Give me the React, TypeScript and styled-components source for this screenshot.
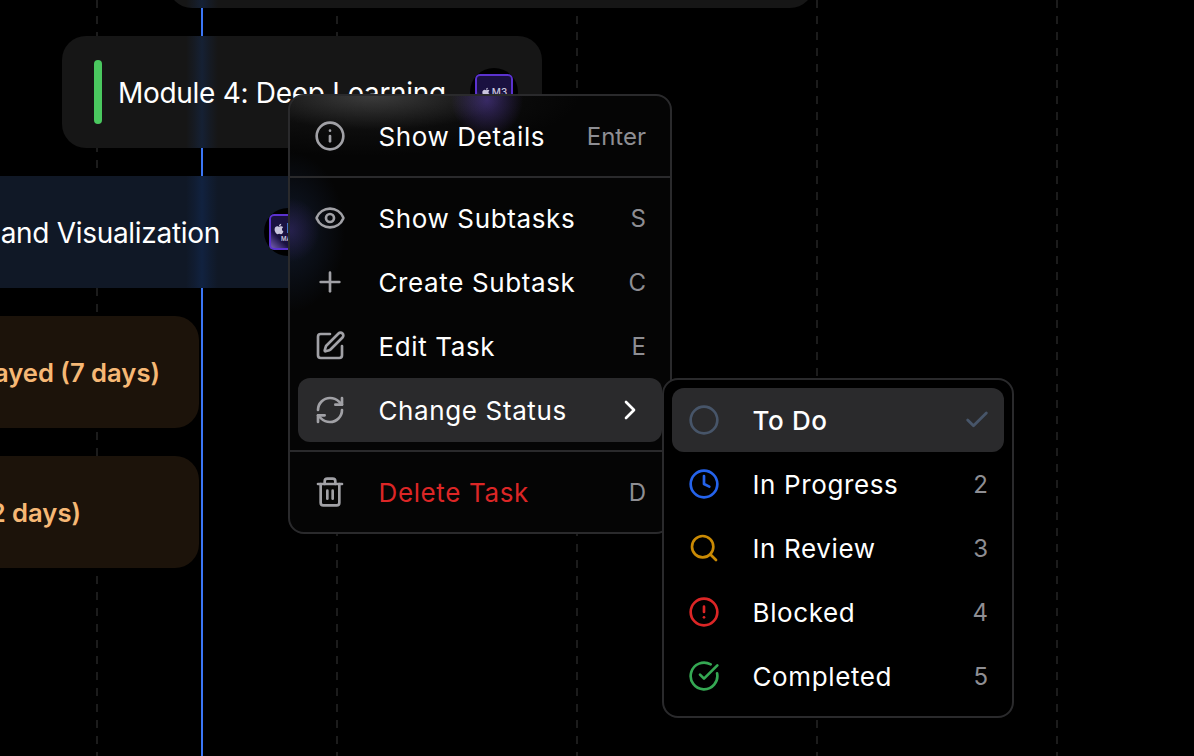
import React from 'react';
import styled, { createGlobalStyle } from 'styled-components';
import {
	Info,
	Eye,
	Plus,
	SquarePen,
	RefreshCw,
	Trash2,
	ChevronRight,
	Circle,
	Clock,
	Search,
	CircleAlert,
	CircleCheckBig,
	Check,
} from 'lucide-react';
import { FaApple } from 'react-icons/fa';

const GlobalStyle = createGlobalStyle`
	html, body {
		margin: 0;
		padding: 0;
		background: #000;
	}
	body {
		font-family: Inter, "Liberation Sans", sans-serif;
		-webkit-font-smoothing: antialiased;
	}
`;

const NOW_X = 202;

const Page = styled.div`
	position: relative;
	width: 1194px;
	height: 756px;
	overflow: hidden;
	background: #000;
`;

const GridLines = styled.div`
	position: absolute;
	inset: 0 0 0 96px;
	display: flex;
	gap: 238px;
`;

const GridLine = styled.div`
	width: 2px;
	height: 100%;
	background: repeating-linear-gradient(to bottom, #1c1c1c 0 8px, transparent 8px 16px);
`;

const NowLine = styled.div`
	position: absolute;
	top: 0;
	bottom: 0;
	left: ${NOW_X - 1}px;
	width: 2px;
	background: #3b76f6;
`;

const Timeline = styled.div`
	position: relative;
	display: flex;
	flex-direction: column;
	gap: 28px;
	margin-top: -104px;
`;

const tones = {
	neutral: '#161616',
	blue: '#101826',
	orange: '#1c130a',
};

// the now line shows through a bar as a soft blue band
const bandAt = (left: number) => {
	const x = NOW_X - left;
	return `linear-gradient(to right, transparent ${x - 16}px, rgba(20, 60, 130, 0.12) ${x - 8}px, rgba(20, 60, 130, 0.28) ${x}px, rgba(20, 60, 130, 0.12) ${x + 8}px, transparent ${x + 16}px)`;
};

const Bar = styled.div<{ $left: number; $width: number; $tone: keyof typeof tones }>`
	display: flex;
	align-items: center;
	box-sizing: border-box;
	flex: none;
	height: 112px;
	margin-left: ${(p) => p.$left}px;
	width: ${(p) => p.$width}px;
	border-radius: 24px;
	background: ${(p) => (p.$tone === 'orange' ? '' : `${bandAt(p.$left)},`)} ${(p) => tones[p.$tone]};
`;

const Accent = styled.div`
	flex: none;
	width: 8px;
	height: 64px;
	margin: 0 16px 0 32px;
	border-radius: 4px;
	background: #4ac85f;
`;

const BarTitle = styled.div<{ $end?: number }>`
	margin-left: ${(p) => (p.$end !== undefined ? 'auto' : '0')};
	margin-right: ${(p) => p.$end ?? 0}px;
	padding-top: 2px;
	font-size: 28px;
	font-weight: 420;
	letter-spacing: -0.3px;
	line-height: 34px;
	color: #fff;
	white-space: nowrap;
`;

const DelayLabel = styled.div<{ $end: number }>`
	margin-left: auto;
	margin-right: ${(p) => p.$end}px;
	padding-top: 2px;
	font-size: 25.6px;
	font-weight: 600;
	line-height: 32px;
	color: #f6b875;
	white-space: nowrap;
`;

const Avatar = styled.div<{ $pushed?: boolean }>`
	flex: none;
	display: flex;
	align-items: center;
	justify-content: center;
	width: 48px;
	height: 48px;
	margin-left: ${(p) => (p.$pushed ? 'auto' : '0')};
	margin-right: 24px;
	border-radius: 50%;
	background: #000;
`;

const Chip = styled.div`
	display: flex;
	flex-direction: column;
	align-items: center;
	justify-content: center;
	width: 38px;
	height: 36px;
	border-radius: 5px;
	background: linear-gradient(to top right, rgba(170, 140, 250, 0.75), transparent 30%), #1a1140;
	box-shadow: inset 0 0 0 2px #5b32cf;
	color: #c9c5dd;
`;

const ChipLogo = styled.div<{ $large?: boolean }>`
	display: flex;
	align-items: center;
	gap: 1px;
	padding-left: ${(p) => (p.$large ? 4 : 0)}px;
	font-size: ${(p) => (p.$large ? 13 : 10)}px;
	font-weight: 500;
	line-height: ${(p) => (p.$large ? 13 : 11)}px;
`;

const ChipSub = styled.div`
	font-size: 6px;
	font-weight: 600;
	line-height: 7px;
`;

// frosted panel: what sits behind it is painted as soft glows
const Menu = styled.div`
	position: absolute;
	left: 288px;
	top: 94px;
	box-sizing: border-box;
	width: 384px;
	padding: 8px;
	border: 2px solid #2a2a2c;
	border-radius: 16px;
	background:
		radial-gradient(ellipse 36px 38px at 197px 4px, rgba(88, 62, 170, 0.55), transparent),
		radial-gradient(ellipse 130px 34px at 85px 0, rgba(255, 255, 255, 0.16), transparent),
		radial-gradient(ellipse 220px 60px at 70px 0, rgba(40, 40, 40, 0.5), transparent),
		radial-gradient(ellipse 30px 32px at 0 134px, rgba(70, 45, 130, 0.4), transparent),
		radial-gradient(ellipse 55px 80px at 0 136px, rgba(25, 40, 70, 0.55), transparent),
		#050505;
`;

const SubMenu = styled(Menu)`
	left: 662px;
	top: 378px;
	width: 352px;
	background: #000;
`;

const Row = styled.div<{ $active?: boolean }>`
	display: flex;
	align-items: center;
	height: 64px;
	padding: 0 16px;
	border-radius: 12px;
	background: ${(p) => (p.$active ? '#2a2a2c' : 'transparent')};
`;

const IconSlot = styled.span<{ $color?: string }>`
	flex: none;
	display: flex;
	width: 32px;
	height: 32px;
	margin-right: 32.5px;
	color: ${(p) => p.$color ?? '#a1a1a6'};
`;

const Label = styled.span<{ $danger?: boolean; $strong?: boolean }>`
	flex: 1;
	padding-top: 2px;
	font-size: 26px;
	font-weight: ${(p) => (p.$strong ? 500 : 400)};
	letter-spacing: 0.62px;
	line-height: 32px;
	color: ${(p) => (p.$danger ? '#dc2626' : '#fff')};
	white-space: nowrap;
`;

const Shortcut = styled.span`
	padding-top: 2px;
	font-size: 24px;
	line-height: 32px;
	color: #8e8e93;
`;

const Arrow = styled.span`
	display: flex;
	color: #fff;
`;

const CheckMark = styled.span`
	display: flex;
	margin-right: -3px;
	color: #475569;
`;

const Divider = styled.div`
	height: 2px;
	margin: 8px -8px;
	background: #2a2a2c;
`;

const ChipBadge = ({ large }: { large?: boolean }) => (
	<Avatar $pushed={!large}>
		<Chip>
			<ChipLogo $large={large}>
				<FaApple size={large ? 12 : 10} />
				M3
			</ChipLogo>
			{large && <ChipSub>MAX</ChipSub>}
		</Chip>
	</Avatar>
);

const statuses = [
	{ label: 'In Progress', icon: Clock, color: '#2563eb', key: '2' },
	{ label: 'In Review', icon: Search, color: '#ca8a04', key: '3' },
	{ label: 'Blocked', icon: CircleAlert, color: '#dc2626', key: '4' },
	{ label: 'Completed', icon: CircleCheckBig, color: '#35a853', key: '5' },
];

export default function App() {
	return (
		<Page>
			<GlobalStyle />
			<GridLines>
				{[0, 1, 2, 3, 4].map((i) => (
					<GridLine key={i} />
				))}
			</GridLines>
			<NowLine />
			<Timeline>
				<Bar $left={168} $width={646} $tone="neutral" />
				<Bar $left={62} $width={480} $tone="neutral">
					<Accent />
					<BarTitle>Module 4: Deep Learning</BarTitle>
					<ChipBadge />
				</Bar>
				<Bar $left={-400} $width={736} $tone="blue">
					<BarTitle $end={44}>and Visualization</BarTitle>
					<ChipBadge large />
				</Bar>
				<Bar $left={-400} $width={599} $tone="orange">
					<DelayLabel $end={39}>Delayed (7 days)</DelayLabel>
				</Bar>
				<Bar $left={-400} $width={599} $tone="orange">
					<DelayLabel $end={118}>Delayed (12 days)</DelayLabel>
				</Bar>
			</Timeline>

			<Menu>
				<Row>
					<IconSlot><Info size={32} /></IconSlot>
					<Label>Show Details</Label>
					<Shortcut>Enter</Shortcut>
				</Row>
				<Divider />
				<Row>
					<IconSlot><Eye size={32} /></IconSlot>
					<Label>Show Subtasks</Label>
					<Shortcut>S</Shortcut>
				</Row>
				<Row>
					<IconSlot><Plus size={32} /></IconSlot>
					<Label>Create Subtask</Label>
					<Shortcut>C</Shortcut>
				</Row>
				<Row>
					<IconSlot><SquarePen size={32} /></IconSlot>
					<Label>Edit Task</Label>
					<Shortcut>E</Shortcut>
				</Row>
				<Row $active>
					<IconSlot><RefreshCw size={32} /></IconSlot>
					<Label>Change Status</Label>
					<Arrow><ChevronRight size={32} /></Arrow>
				</Row>
				<Divider />
				<Row>
					<IconSlot><Trash2 size={32} /></IconSlot>
					<Label $danger>Delete Task</Label>
					<Shortcut>D</Shortcut>
				</Row>
			</Menu>

			<SubMenu>
				<Row $active>
					<IconSlot $color="#475569"><Circle size={32} /></IconSlot>
					<Label $strong>To Do</Label>
					<CheckMark><Check size={28} strokeWidth={2.4} /></CheckMark>
				</Row>
				{statuses.map((s) => (
					<Row key={s.label}>
						<IconSlot $color={s.color}><s.icon size={32} /></IconSlot>
						<Label>{s.label}</Label>
						<Shortcut>{s.key}</Shortcut>
					</Row>
				))}
			</SubMenu>
		</Page>
	);
}
